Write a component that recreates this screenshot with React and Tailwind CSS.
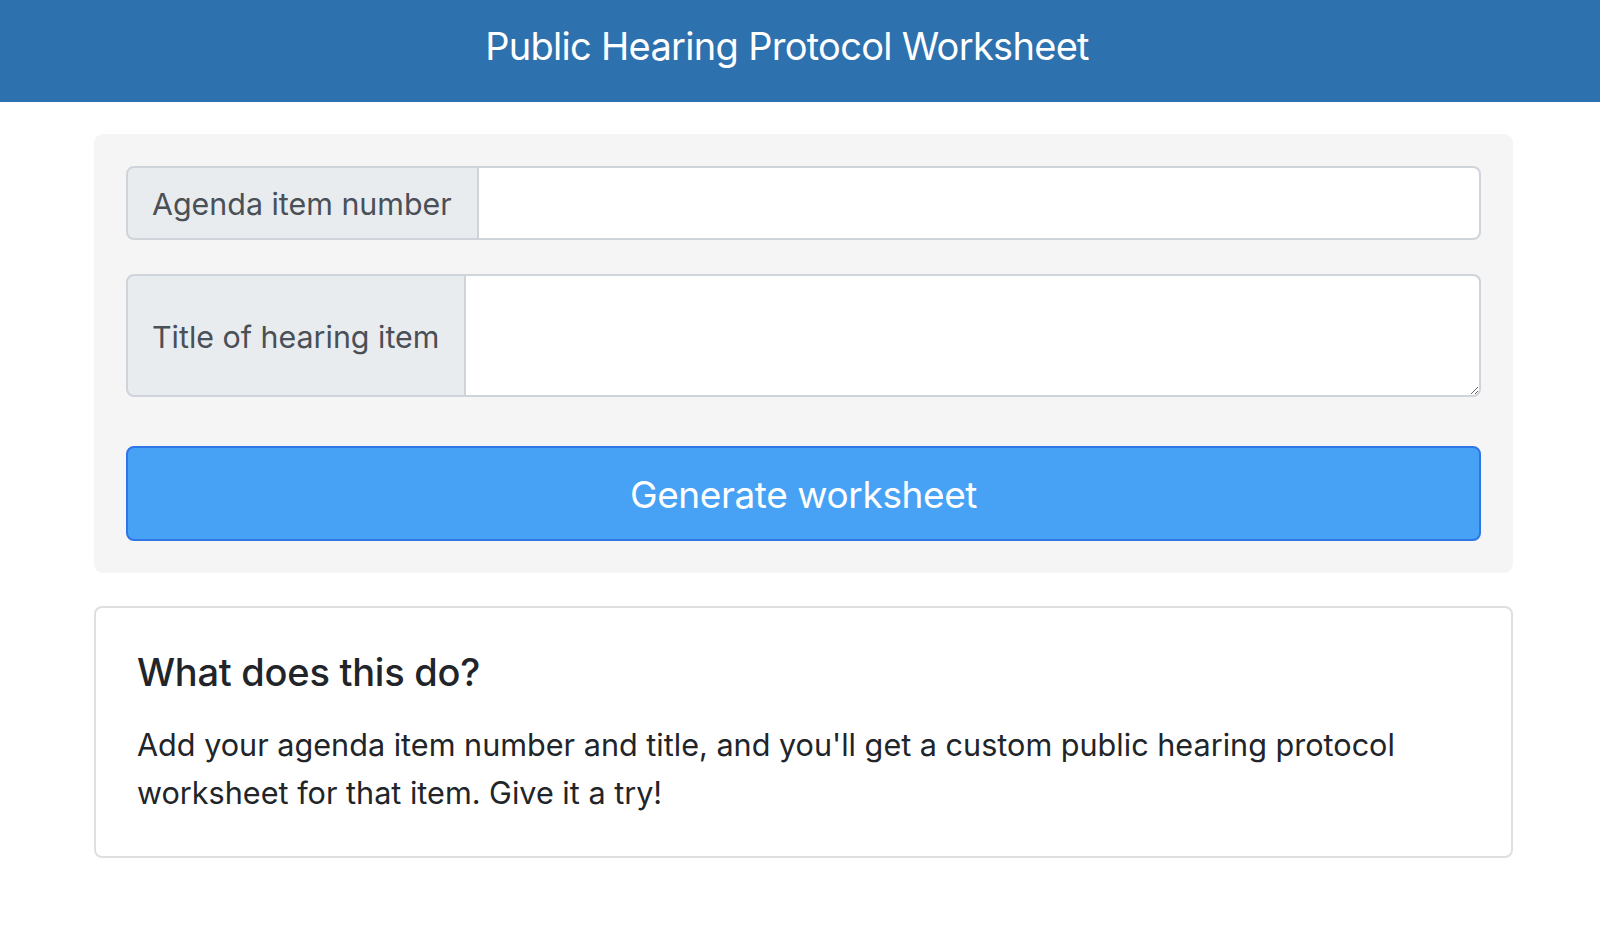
export default function App() {
	return (
		<div className="min-h-screen bg-white font-['Inter','Liberation_Sans',sans-serif]">
			<header className="flex h-[102px] items-center justify-center bg-[#2d71ae] pb-[11px] pr-[26px]">
				<h1 className="text-[38px] font-normal leading-none tracking-[-0.7px] text-white">Public Hearing Protocol Worksheet</h1>
			</header>

			<main className="pl-[94px] pr-[87px] pt-[32px]">
				<form className="rounded-[9px] bg-[#f5f5f5] p-[32px]" onSubmit={(e) => e.preventDefault()}>
					<div className="flex h-[74px]">
						<label className="flex w-[353px] shrink-0 items-center rounded-l-[8px] border-2 border-[#ced4da] bg-[#e9ecef] px-[24px] pt-[4px] text-[30.4px] text-[#495057]">
							Agenda item number
						</label>
						<input
							type="text"
							className="min-w-0 flex-1 rounded-r-[8px] border-2 border-l-0 border-[#ced4da] bg-white px-[24px] text-[30.4px] text-[#495057] outline-none"
						/>
					</div>

					<div className="mt-[34px] flex h-[123px]">
						<label className="flex w-[340px] shrink-0 items-center rounded-l-[8px] border-2 border-[#ced4da] bg-[#e9ecef] px-[24px] pt-[4px] text-[30.4px] text-[#495057]">
							Title of hearing item
						</label>
						<textarea className="min-w-0 flex-1 rounded-r-[8px] border-2 border-l-0 border-[#ced4da] bg-white px-[24px] py-[12px] text-[30.4px] text-[#495057] outline-none" />
					</div>

					<button
						type="submit"
						className="mt-[49px] flex h-[95px] w-full items-center justify-center rounded-[8px] border-2 border-[#2f75e6] bg-[#47a2f5] pt-[2px] text-[37px] tracking-[-0.4px] text-white"
					>
						Generate worksheet
					</button>
				</form>

				<section className="mt-[33px] rounded-[8px] border-2 border-[#dfdfdf] px-[41px] pt-[42px] pb-[39px] text-[#212529]">
					<h5 className="mb-[25px] text-[38px] font-medium leading-[1.2] tracking-[-0.25px]">What does this do?</h5>
					<p className="text-[30.6px] leading-[48px]">
						Add your agenda item number and title, and you'll get a custom public hearing protocol worksheet for that item. Give it a try!
					</p>
				</section>
			</main>
		</div>
	);
}
